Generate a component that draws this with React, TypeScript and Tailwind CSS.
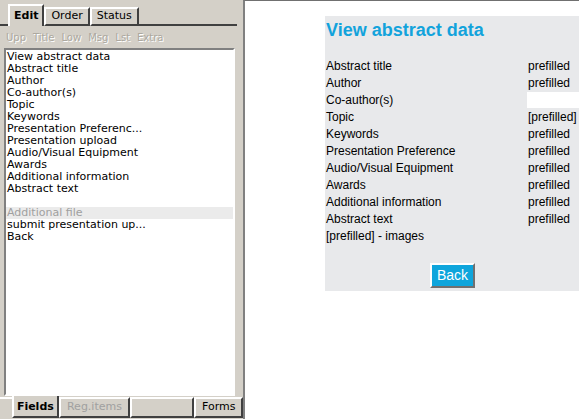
import React from "react";

const fields = [
  "View abstract data",
  "Abstract title",
  "Author",
  "Co-author(s)",
  "Topic",
  "Keywords",
  "Presentation Preferenc...",
  "Presentation upload",
  "Audio/Visual Equipment",
  "Awards",
  "Additional information",
  "Abstract text",
];

const rows: [string, string | null][] = [
  ["Abstract title", "prefilled"],
  ["Author", "prefilled"],
  ["Co-author(s)", null],
  ["Topic", "[prefilled]"],
  ["Keywords", "prefilled"],
  ["Presentation Preference", "prefilled"],
  ["Audio/Visual Equipment", "prefilled"],
  ["Awards", "prefilled"],
  ["Additional information", "prefilled"],
  ["Abstract text", "prefilled"],
];

const verdana = { fontFamily: '"DejaVu Sans", Verdana, sans-serif' };
const arial = { fontFamily: '"Liberation Sans", Arial, sans-serif' };

const App: React.FC = () => {
  return (
    <div className="flex w-[579px] h-[419px] overflow-hidden bg-white">
      {/* left frame */}
      <div className="w-[243px] h-full flex flex-col bg-[#d4d0c8] text-[10px]" style={verdana}>
        <div className="flex items-end h-[26px] pt-[4px]">
          <div className="w-[8px] border-b-2 border-[#404040] mb-0" />
          <div className="h-[22px] px-[4px] flex items-center font-bold text-[11px] text-black border-t-2 border-l-2 border-r-2 border-t-white border-l-white border-r-[#404040] bg-[#d4d0c8]">
            Edit
          </div>
          <div className="h-[19px] px-[5px] flex items-center text-[11px] text-black border-2 border-t-white border-l-white border-r-[#404040] border-b-[#404040]">
            Order
          </div>
          <div className="h-[19px] px-[5px] flex items-center text-[11px] text-black border-2 border-t-white border-l-white border-r-[#404040] border-b-[#404040]">
            Status
          </div>
          <div className="flex-1 mr-[6px] border-b-2 border-[#404040]" />
        </div>
        <div className="flex gap-[7px] px-[6px] h-[22px] items-center text-[#aca89f] [text-shadow:1px_1px_0_#ffffff]">
          <span>Upp</span>
          <span>Title</span>
          <span>Low</span>
          <span>Msg</span>
          <span>Lst</span>
          <span>Extra</span>
        </div>
        <div className="ml-[4px] w-[231px] flex-1 bg-white border-t-2 border-l-2 border-[#808080] border-r-2 border-r-white border-b-2 border-b-white pt-[1px] text-[11px] leading-[12px] text-black">
          {fields.map((f) => (
            <div key={f} className="pl-[1px]">{f}</div>
          ))}
          <div className="h-[12px]" />
          <div className="pl-[1px] bg-[#ebebeb] text-[#a0a0a0]">Additional file</div>
          <div className="pl-[1px]">submit presentation up...</div>
          <div className="pl-[1px]">Back</div>
        </div>
        <div className="flex items-start h-[23px] pt-[1px] text-[11px]">
          <div className="w-[12px] border-t-2 border-[#ffffff]" />
          <div className="h-[22px] pt-[2px] px-[3px] flex items-center font-bold text-black border-l-2 border-l-white border-r-2 border-r-[#404040] border-b-2 border-b-[#404040] relative -top-[1px]">
            Fields
          </div>
          <div className="w-[72px] h-[21px] flex items-center justify-center text-[#a0a0a0] border-2 border-t-white border-l-white border-r-[#404040] border-b-[#404040]">
            Reg.items
          </div>
          <div className="w-[65px] h-[21px] border-2 border-t-white border-l-white border-r-[#404040] border-b-[#404040]" />
          <div className="w-[49px] h-[21px] flex items-center justify-center text-black border-2 border-t-white border-l-white border-r-[#404040] border-b-[#404040]">
            Forms
          </div>
        </div>
      </div>

      {/* right frame */}
      <div className="flex-1 h-full border-l-2 border-[#808080] border-t border-t-[#707070] pt-[15px] pl-[80px]" style={arial}>
        <div className="bg-[#e8e9eb] h-[275px] pl-[1px] pt-[3px]">
          <h1 className="text-[18px] font-bold text-[#12a3dc] leading-[22px] mb-[17px]">View abstract data</h1>
          <div className="text-[12px] leading-[17px] text-black">
            {rows.map(([label, value]) => (
              <div key={label} className="flex h-[17px]">
                <div className="w-[201px]">{label}</div>
                {value ? (
                  <div className="pl-[1px]">{value}</div>
                ) : (
                  <div className="flex-1 bg-white h-[16px]" />
                )}
              </div>
            ))}
            <div className="h-[17px]">[prefilled] - images</div>
          </div>
          <div className="flex justify-center pt-[18px]">
            <button className="bg-[#0ea5dc] text-white text-[14px] leading-[19px] px-[5px] py-[1px] border-2 border-t-white border-l-white border-r-[#707070] border-b-[#707070]">
              Back
            </button>
          </div>
        </div>
      </div>
    </div>
  );
};

export default App;
